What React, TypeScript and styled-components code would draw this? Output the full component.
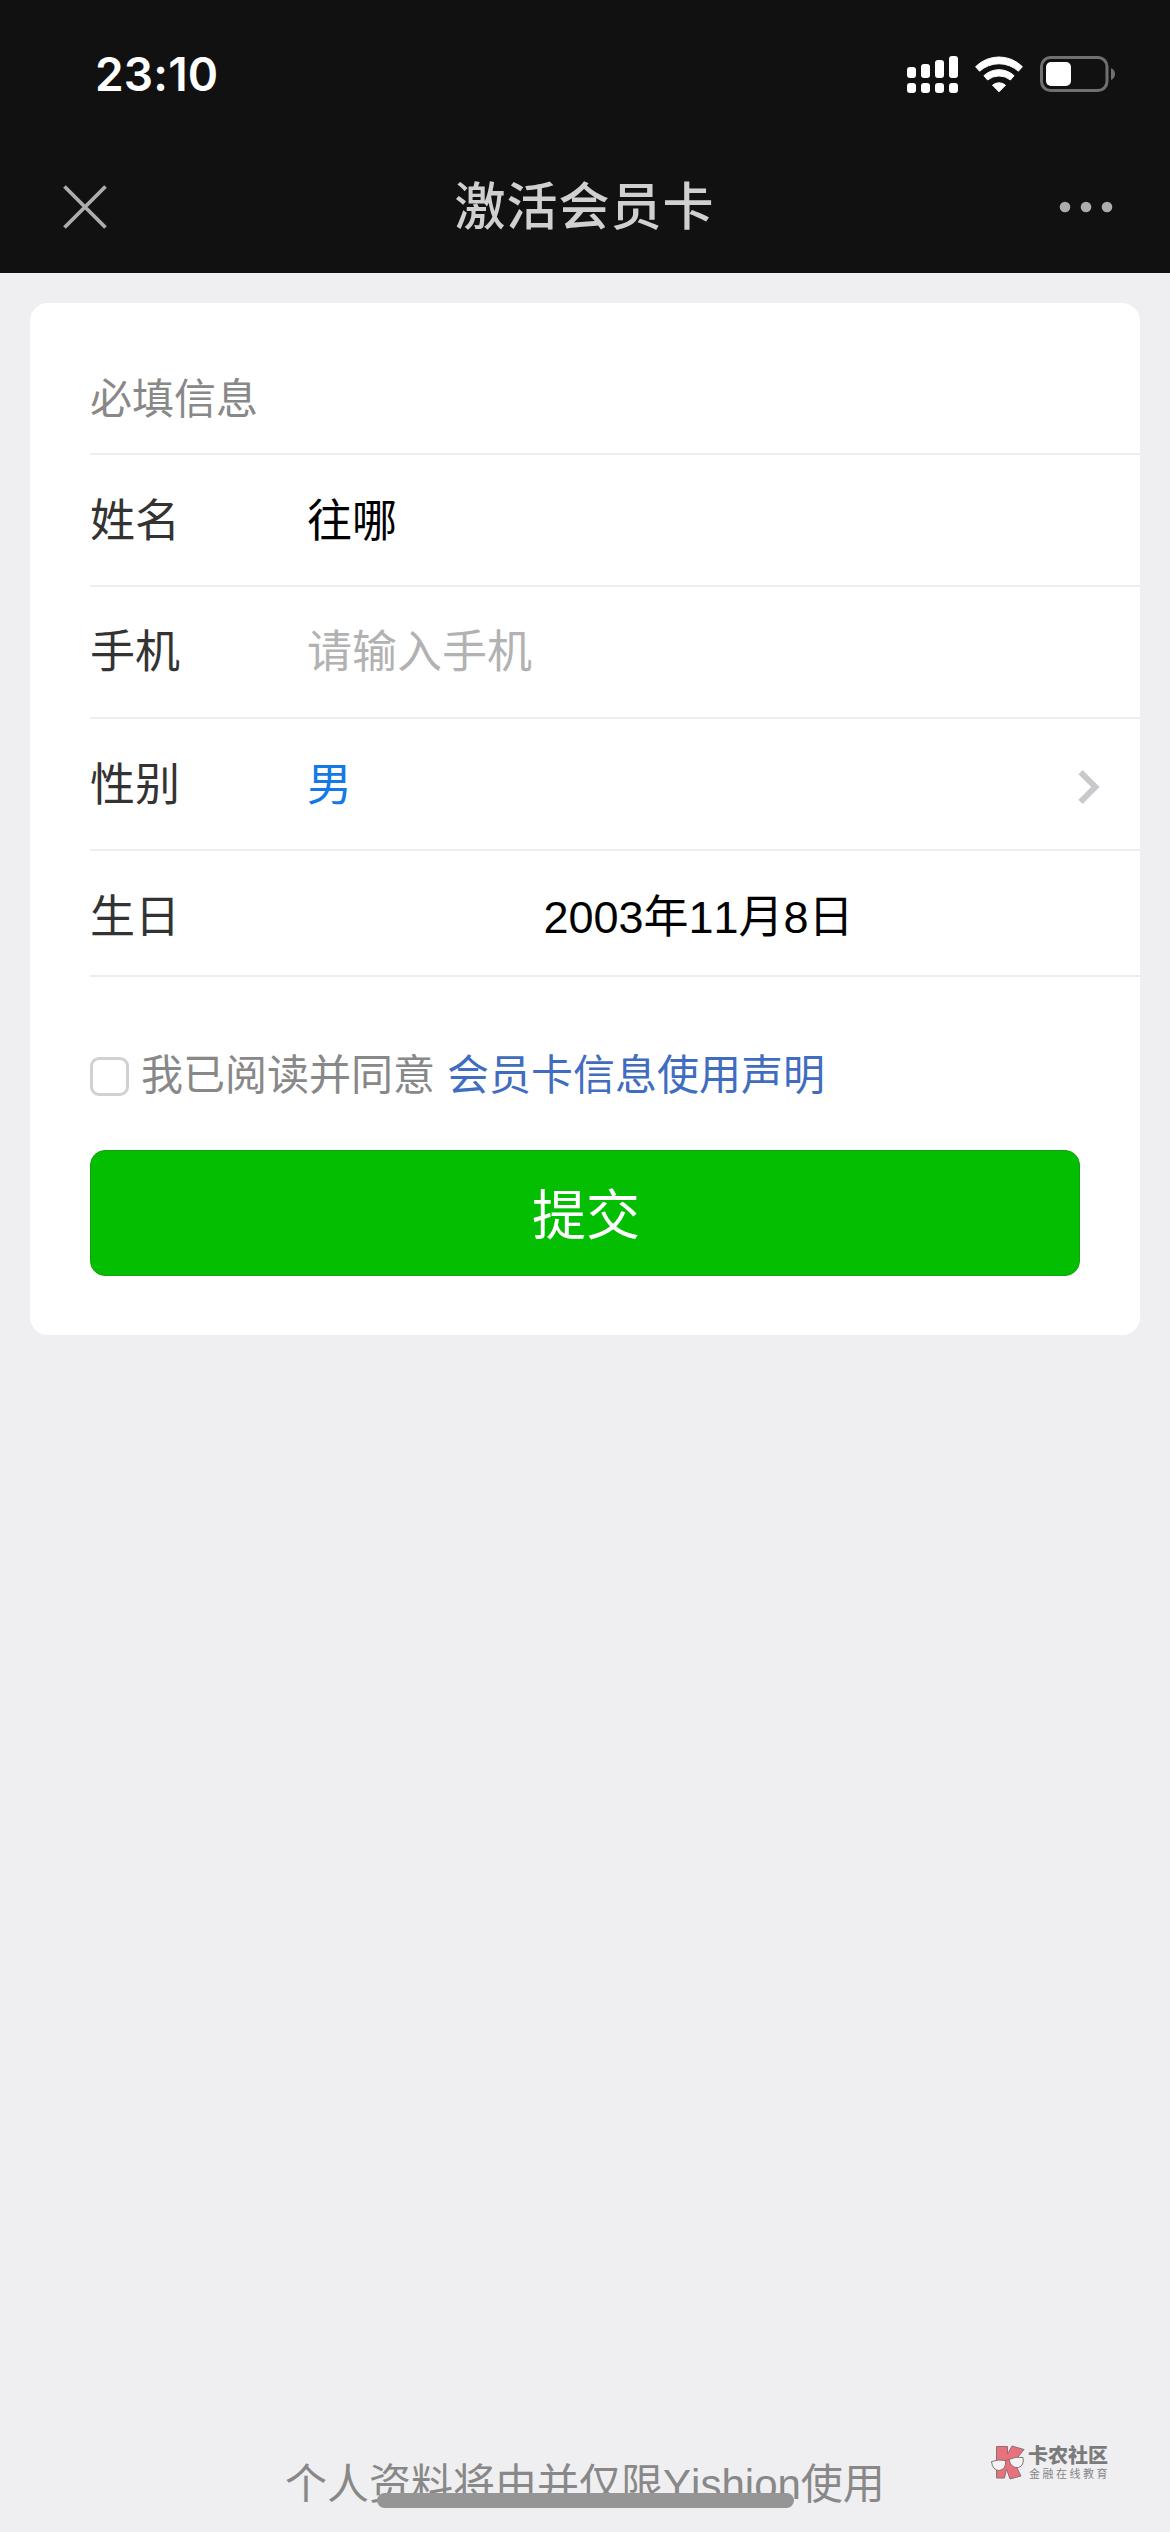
import React, { useState } from "react";
import styled, { createGlobalStyle } from "styled-components";

const GlobalStyle = createGlobalStyle`
  * { box-sizing: border-box; }
  body {
    margin: 0;
    background: #efeff1;
    font-family: "Liberation Sans", "Noto Sans CJK SC", sans-serif;
    font-kerning: none;
  }
`;

const Screen = styled.div`
  position: relative;
  display: flex;
  flex-direction: column;
  width: 1170px;
  height: 2532px;
  overflow: hidden;
  background: #efeff1;
`;

const Header = styled.header`
  height: 273px;
  background: #111111;
`;

const StatusBar = styled.div`
  display: flex;
  align-items: center;
  justify-content: space-between;
  height: 148px;
  padding: 0 55px 0 95px;
`;

const Clock = styled.time`
  color: #fff;
  font: 600 46px/56px Inter, sans-serif;
  letter-spacing: 0.2px;
`;

const StatusIcons = styled.div`
  display: flex;
  align-items: center;
  gap: 17px;
`;

const NavBar = styled.div`
  display: grid;
  grid-template-columns: 200px 1fr 200px;
  align-items: center;
  height: 118px;
  padding: 0 57px 0 62px;
`;

const Title = styled.h1`
  margin: 0;
  padding: 2px 6px 0 0;
  color: #d0d0d0;
  font-size: 51px;
  font-weight: 500;
  line-height: 72px;
  letter-spacing: 1px;
  text-align: center;
`;

const IconButton = styled.button<{ $end?: boolean }>`
  display: flex;
  justify-self: ${(p) => (p.$end ? "end" : "start")};
  padding: 0;
  border: 0;
  background: none;
`;

const Card = styled.form`
  height: 1032px;
  margin: 30px 30px 0;
  padding-left: 60px;
  border-radius: 18px;
  background: #fff;
`;

const SectionTitle = styled.h2`
  display: flex;
  align-items: flex-end;
  height: 152px;
  margin: 0;
  padding-bottom: 23px;
  border-bottom: 2px solid #ededed;
  color: #888;
  font-size: 42px;
  font-weight: 400;
  line-height: 60px;
`;

const Row = styled.div<{ $height?: number; $shift?: number }>`
  display: flex;
  align-items: center;
  height: ${(p) => p.$height ?? 132}px;
  padding: ${(p) => p.$shift ?? 3}px 40px 0 0;
  border-bottom: 2px solid #ededed;
  font-size: 45px;
  line-height: 64px;
`;

const Label = styled.label`
  width: 217px;
  color: #333;
`;

const Value = styled.span<{ $color?: string; $center?: boolean }>`
  flex: 1;
  padding-right: ${(p) => (p.$center ? 10 : 0)}px;
  color: ${(p) => p.$color ?? "#000"};
  text-align: ${(p) => (p.$center ? "center" : "left")};
`;

const Agreement = styled.div`
  display: flex;
  align-items: center;
  height: 60px;
  margin-top: 69px;
  color: #888;
  font-size: 42px;
  line-height: 60px;
`;

const Checkbox = styled.input`
  appearance: none;
  width: 39px;
  height: 39px;
  margin: 0 12px 0 0;
  border: 3px solid #d1d1d1;
  border-radius: 9px;
  background: #fff;
`;

const StatementLink = styled.a`
  margin-left: 12px;
  color: #416dc0;
`;

const Submit = styled.button`
  display: flex;
  align-items: center;
  justify-content: center;
  width: 990px;
  height: 126px;
  margin-top: 44px;
  padding: 6px 0 0 2px;
  border: 1px solid #12a012;
  border-radius: 15px;
  background: #04be02;
  color: #fff;
  font: inherit;
  font-size: 54px;
  line-height: 76px;
`;

const Footer = styled.footer`
  margin-top: auto;
  padding-bottom: 17px;
  color: #888;
  font-size: 42px;
  line-height: 60px;
  text-align: center;
`;

const HomeIndicator = styled.div`
  position: absolute;
  bottom: 24px;
  left: 377px;
  width: 417px;
  height: 15px;
  border-radius: 8px;
  background: #959595;
`;

const Watermark = styled.div`
  position: absolute;
  right: 60px;
  bottom: 50px;
  display: flex;
  align-items: center;
  gap: 3px;
  width: 120px;
  height: 38px;
`;

const WatermarkText = styled.div`
  display: flex;
  flex-direction: column;
  color: #7b7b7b;
  white-space: nowrap;
`;

const Brand = styled.strong`
  font-size: 20px;
  font-weight: 900;
  line-height: 21px;
`;

const Tagline = styled.span`
  padding-left: 1px;
  color: #858585;
  font-size: 11px;
  line-height: 14px;
  letter-spacing: 2.5px;
`;

const signalBars = [
  { x: 0, y: 11 },
  { x: 14, y: 8 },
  { x: 28, y: 4 },
  { x: 42, y: 0 },
];

function SignalIcon() {
  return (
    <svg width="51" height="37" viewBox="0 0 51 37" fill="#fff">
      {signalBars.map((b) => (
        <g key={b.x}>
          <rect x={b.x} y={b.y} width="9" height={22 - b.y} rx="3" />
          <rect x={b.x} y="27" width="9" height="10" rx="3" />
        </g>
      ))}
    </svg>
  );
}

function WifiIcon() {
  return (
    <svg width="48" height="37" viewBox="0 0 48 37" fill="#fff" stroke="#fff" strokeWidth="1" strokeLinejoin="round">
      <path d="M.6 10.7A33 33 0 0 1 47.4 10.7L43.4 15.2A29 29 0 0 0 4.6 15.2Z" />
      <path d="M8.9 19.7A22 22 0 0 1 39.1 19.7L35.4 24A18 18 0 0 0 12.6 24Z" />
      <path d="M17.5 29.2A10 10 0 0 1 30.5 29.2L24 35.8Z" />
    </svg>
  );
}

function BatteryIcon() {
  return (
    <svg width="75" height="36" viewBox="0 0 75 36">
      <rect x="1.5" y="1.5" width="65.5" height="33" rx="9" fill="none" stroke="#707070" strokeWidth="3" />
      <rect x="6" y="6" width="25" height="24" rx="5" fill="#fff" />
      <path d="M71 12Q75 14 75 18T71 24Z" fill="#707070" />
    </svg>
  );
}

function CloseIcon() {
  return (
    <svg width="46" height="46" viewBox="0 0 46 46" stroke="#adadad" strokeWidth="3.8">
      <path d="M2.5 2.5L43.5 43.5M43.5 2.5L2.5 43.5" />
    </svg>
  );
}

function MoreIcon() {
  return (
    <svg width="54" height="12" viewBox="0 0 54 12" fill="#adadad">
      <circle cx="6" cy="6" r="5.3" />
      <circle cx="27" cy="6" r="5.3" />
      <circle cx="48" cy="6" r="5.3" />
    </svg>
  );
}

function ChevronIcon() {
  return (
    <svg width="22" height="36" viewBox="0 -2 22 36" fill="none" stroke="#c8c8cd" strokeWidth="6">
      <path d="M2.5 2.2L17.3 17L2.5 31.8" />
    </svg>
  );
}

function BrandLogo() {
  return (
    <svg width="35" height="36" viewBox="0 0 35 36" stroke="#8a7073" strokeWidth="1">
      <path d="M6.5 1.5H17.5V9L22 1L34 4.5L24 17L31 31L20 34L16.5 24L14.5 33H6.5Z" fill="#e8717d" />
      <path d="M1.5 16.5Q8.5 14 15.5 15.5Q16.5 24 9.5 25.5Q2.5 25.5 1.5 16.5Z" fill="#f3f3f4" />
      <path d="M19 14.5Q26 11 33 12.5Q34.5 20.5 28.5 22.5Q21 23.5 19 14.5Z" fill="#f3f3f4" />
      <path d="M15.5 16Q17 14 19 15" fill="none" />
    </svg>
  );
}

export default function App() {
  const [agreed, setAgreed] = useState(false);
  return (
    <Screen>
      <GlobalStyle />
      <Header>
        <StatusBar>
          <Clock>23:10</Clock>
          <StatusIcons>
            <SignalIcon />
            <WifiIcon />
            <BatteryIcon />
          </StatusIcons>
        </StatusBar>
        <NavBar>
          <IconButton>
            <CloseIcon />
          </IconButton>
          <Title>激活会员卡</Title>
          <IconButton $end>
            <MoreIcon />
          </IconButton>
        </NavBar>
      </Header>

      <Card onSubmit={(e) => e.preventDefault()}>
        <SectionTitle>必填信息</SectionTitle>
        <Row>
          <Label>姓名</Label>
          <Value>往哪</Value>
        </Row>
        <Row $shift={2}>
          <Label>手机</Label>
          <Value $color="#b2b2b2">请输入手机</Value>
        </Row>
        <Row>
          <Label>性别</Label>
          <Value $color="#1478e6">男</Value>
          <ChevronIcon />
        </Row>
        <Row $height={126} $shift={9}>
          <Label>生日</Label>
          <Value $center>2003年11月8日</Value>
        </Row>
        <Agreement>
          <Checkbox type="checkbox" checked={agreed} onChange={(e) => setAgreed(e.target.checked)} />
          我已阅读并同意
          <StatementLink>会员卡信息使用声明</StatementLink>
        </Agreement>
        <Submit>提交</Submit>
      </Card>

      <Footer>个人资料将由并仅限Yishion使用</Footer>

      <Watermark>
        <BrandLogo />
        <WatermarkText>
          <Brand>卡农社区</Brand>
          <Tagline>金融在线教育</Tagline>
        </WatermarkText>
      </Watermark>
      <HomeIndicator />
    </Screen>
  );
}
